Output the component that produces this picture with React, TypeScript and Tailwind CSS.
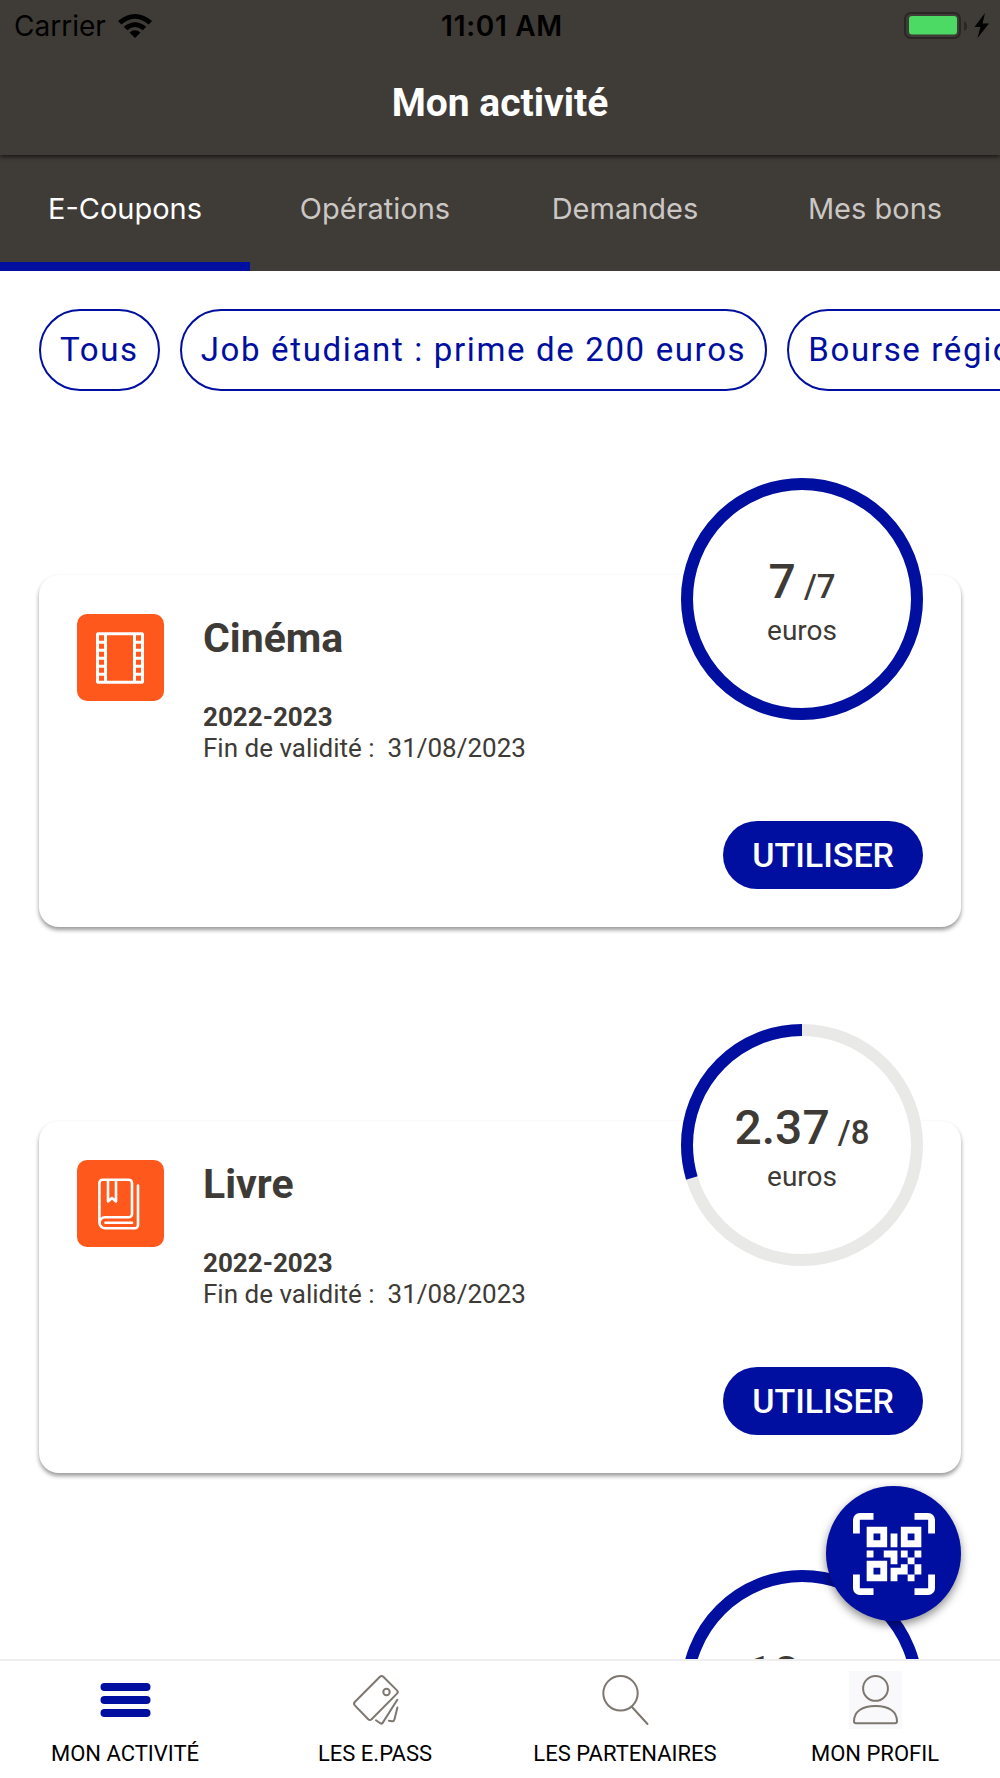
import React, { useState } from "react";

interface Coupon {
  id: string;
  title: string;
  period: string;
  validity: string;
  remaining: number;
  total: number;
  icon: React.FC;
}

const CinemaIcon: React.FC = () => (
  <svg viewBox="0 0 87 87" className="size-full" fill="none" stroke="white" strokeWidth="3">
    <rect x="20.5" y="19.8" width="45" height="48.4" rx="0.5" />
    <path d="M28.5 20v48M57.5 20v48" />
    <path d="M20 28.2h8M20 36.2h8M20 44.2h8M20 52.2h8M20 60.2h8" />
    <path d="M58 28.2h8M58 36.2h8M58 44.2h8M58 52.2h8M58 60.2h8" />
  </svg>
);

const BookIcon: React.FC = () => (
  <svg
    viewBox="0 0 87 87"
    className="size-full"
    fill="none"
    stroke="white"
    strokeWidth="2.6"
    strokeLinecap="round"
    strokeLinejoin="round"
  >
    <path d="M22.4 62.7V23a3.3 3.3 0 0 1 3.3-3.3h26a3.3 3.3 0 0 1 3.3 3.3v31a3.3 3.3 0 0 1-3.3 3.3H28a5.5 5.5 0 0 0 0 11h29.7a3.3 3.3 0 0 0 3.3-3.3V25.5" />
    <path d="M28.5 62.8H55" />
    <path d="M31 20v21.5l4-3.5 4 3.5V20" />
  </svg>
);

const MenuIcon: React.FC = () => (
  <svg viewBox="0 0 53 58" className="size-full" fill="#000f9f">
    <rect x="1.5" y="12" width="50" height="8" rx="4" />
    <rect x="1.5" y="25" width="50" height="8" rx="4" />
    <rect x="1.5" y="38" width="50" height="8" rx="4" />
  </svg>
);

const PassIcon: React.FC = () => (
  <svg
    viewBox="0 0 53 58"
    className="size-full"
    fill="none"
    stroke="#7d7770"
    strokeWidth="2"
    strokeLinecap="round"
    strokeLinejoin="round"
  >
    <path d="M34.3 5.8 48 19.4q1.6 1.6 0 3.2L22.6 48.2q-1.7 1.7-3.4 0L5.8 34.4q-1.6-1.7 0-3.4L30.9 5.8q1.7-1.7 3.4 0Z" />
    <circle cx="37.5" cy="21" r="3.2" />
    <path d="M48.3 28.8 33.8 51.6q-1 1.6-2.6.6L27 49.3" />
    <path d="m48.4 36.5-2.9 11.8q-.5 2.2-2.6 1.9l-3-.5" />
  </svg>
);

const SearchIcon: React.FC = () => (
  <svg viewBox="0 0 53 58" className="size-full" fill="none" stroke="#7d7770" strokeWidth="2">
    <circle cx="21.5" cy="22.3" r="17.2" />
    <path d="M33 36l15.5 17" strokeLinecap="round" />
  </svg>
);

const ProfileIcon: React.FC = () => (
  <svg viewBox="0 0 53 58" className="size-full bg-[#f9f9fc]" fill="none" stroke="#7d7770" strokeWidth="2">
    <circle cx="26.5" cy="17.4" r="12.4" />
    <path d="M5 50.3C5 40.5 13 35 26.5 35S48 40.5 48 50.3q0 2-2 2H7q-2 0-2-2Z" />
  </svg>
);

const WifiIcon: React.FC = () => (
  <svg viewBox="0 0 34 24" className="h-6 w-[34px]" fill="black">
    <path d="M0 7Q17-7 34 7l-3.4 3.5Q17-1 3.4 10.5Z" />
    <path d="M5.8 12.8Q17 3.6 28.2 12.8L24.8 16.2Q17 10 9.2 16.2Z" />
    <path d="M11.5 18.4Q17 14.2 22.5 18.4L17 24Z" />
  </svg>
);

const BatteryIcon: React.FC = () => (
  <svg viewBox="0 0 86 28" className="h-7 w-[86px]">
    <rect x="1" y="1" width="55" height="25" rx="6" fill="none" stroke="#2a2623" strokeWidth="2" />
    <rect x="5" y="4" width="48" height="18.5" rx="3" fill="#4cd964" />
    <path d="M60 9q3 1.5 3 5t-3 5Z" fill="#2a2623" />
    <path d="M81 1 70.5 15h6l-3 11L85 11.5h-6.5Z" fill="black" />
  </svg>
);

const QrScanIcon: React.FC = () => (
  <svg viewBox="0 0 12 12" className="size-[82px]" fill="white" fillRule="evenodd">
    <path d="M0 3V1a1 1 0 0 1 1-1h2v1H1v2ZM9 0h2a1 1 0 0 1 1 1v2h-1V1H9ZM12 9v2a1 1 0 0 1-1 1H9v-1h2V9ZM3 12H1a1 1 0 0 1-1-1V9h1v2h2Z" />
    <path d="M2 2h3v3H2ZM3 3v1h1V3ZM7 2h3v3H7ZM8 3v1h1V3ZM2 7h3v3H2ZM3 8v1h1V8Z" />
    <path d="M5.5 3h1v2h-1ZM2 5.5h1v1H2ZM4.5 5.5h2v2h-1v-1h-1ZM7 5.5h1v1H7ZM9 5.5h1v1H9ZM8 6.5h1v1H8Z" />
    <path d="M7 7.5h1V9H6.5v1h-1V8H7ZM9 7.5h1V9H9ZM8 9h1v1H8Z" />
  </svg>
);

const tabs = ["E-Coupons", "Opérations", "Demandes", "Mes bons"];

const filters = ["Tous", "Job étudiant : prime de 200 euros", "Bourse régionale"];

const coupons: Coupon[] = [
  {
    id: "cinema",
    title: "Cinéma",
    period: "2022-2023",
    validity: "31/08/2023",
    remaining: 7,
    total: 7,
    icon: CinemaIcon,
  },
  {
    id: "livre",
    title: "Livre",
    period: "2022-2023",
    validity: "31/08/2023",
    remaining: 2.37,
    total: 8,
    icon: BookIcon,
  },
  {
    id: "spectacle",
    title: "Spectacle",
    period: "2022-2023",
    validity: "31/08/2023",
    remaining: 10,
    total: 10,
    icon: CinemaIcon,
  },
];

const navItems = [
  { label: "MON ACTIVITÉ", icon: MenuIcon },
  { label: "LES E.PASS", icon: PassIcon },
  { label: "LES PARTENAIRES", icon: SearchIcon },
  { label: "MON PROFIL", icon: ProfileIcon },
];

const BalanceRing: React.FC<{ remaining: number; total: number }> = ({ remaining, total }) => (
  <div className="grid size-[242px] place-items-center rounded-full bg-white">
    <svg viewBox="0 0 242 242" className="size-full [grid-area:1/1]" fill="none" strokeWidth="12">
      <circle cx="121" cy="121" r="115" stroke="#e9e9e8" />
      {/* Fills counter-clockwise from the top */}
      <circle
        cx="121"
        cy="121"
        r="115"
        stroke="#000f9f"
        pathLength={100}
        strokeDasharray={`${(remaining / total) * 100} 100`}
        transform="translate(242 0) scale(-1 1) rotate(-90 121 121)"
      />
    </svg>
    <div className="pt-2.5 text-center [grid-area:1/1]">
      <p className="text-[48px] leading-12 font-medium">
        {remaining}
        <span className="text-[33px]"> /{total}</span>
      </p>
      <p className="text-[28px] leading-10">euros</p>
    </div>
  </div>
);

const CouponCard: React.FC<{ coupon: Coupon }> = ({ coupon }) => {
  const Icon = coupon.icon;
  return (
    <article className="flex rounded-[20px] bg-white px-[38px] pt-[39px] pb-[38px] shadow-[0_3px_4px_rgba(0,0,0,0.4)]">
      <div className="size-[87px] shrink-0 overflow-hidden rounded-[10px] bg-[#ff581c]">
        <Icon />
      </div>
      <div className="flex-1 pl-[39px]">
        <h2 className="text-[41px] leading-12 font-bold">{coupon.title}</h2>
        <p className="mt-10 text-[26px] leading-[31px] font-bold">{coupon.period}</p>
        <p className="text-[26px] leading-[31px]">Fin de validité :&nbsp; {coupon.validity}</p>
      </div>
      {/* The ring sticks out above the card */}
      <div className="-mt-[136px] flex flex-col items-end gap-[101px]">
        <BalanceRing remaining={coupon.remaining} total={coupon.total} />
        <button
          type="button"
          className="h-[68px] rounded-full bg-[#000f9f] px-[29px] text-[34px] leading-10 font-medium text-white"
        >
          UTILISER
        </button>
      </div>
    </article>
  );
};

const App: React.FC = () => {
  const [activeTab, setActiveTab] = useState("E-Coupons");

  return (
    <div className="flex h-screen flex-col overflow-hidden bg-white font-['Roboto',sans-serif] text-[#3e3a35]">
      <header className="relative z-10 bg-[#3f3b36] pb-8 shadow-[0_2px_4px_rgba(0,0,0,0.6)]">
        <div className="flex h-[51px] items-center px-3.5 font-['Inter',sans-serif] text-[28px] text-black">
          <div className="flex flex-1 items-center gap-3">
            <span>Carrier</span>
            <WifiIcon />
          </div>
          <span className="font-semibold tracking-wide">11:01 AM</span>
          <div className="-mr-1 flex flex-1 justify-end">
            <BatteryIcon />
          </div>
        </div>
        <h1 className="pt-8 text-center text-[39px] leading-10 font-bold text-white">Mon activité</h1>
      </header>

      <div role="tablist" className="grid grid-cols-4 bg-[#3f3b36]">
        {tabs.map((tab) => (
          <button
            key={tab}
            type="button"
            role="tab"
            aria-selected={activeTab === tab}
            onClick={() => setActiveTab(tab)}
            className={`h-[116px] border-b-9 font-['Inter',sans-serif] text-[29px] ${
              activeTab === tab ? "border-[#000f9f] text-white" : "border-transparent text-[#cbc7c4]"
            }`}
          >
            {tab}
          </button>
        ))}
      </div>

      <div className="relative min-h-0 flex-1">
        <main className="h-full overflow-y-auto [scrollbar-width:none]">
          <div className="flex gap-5 overflow-x-auto px-[39px] pt-[38px] [scrollbar-width:none]">
            {filters.map((filter) => (
              <button
                key={filter}
                type="button"
                className="h-[82px] shrink-0 rounded-full border-2 border-[#000f9f] px-[19px] text-[33px] tracking-wider whitespace-nowrap text-[#000f9f]"
              >
                {filter}
              </button>
            ))}
          </div>

          <div className="flex flex-col gap-[194px] px-[39px] pt-[184px] pb-10">
            {coupons.map((coupon) => (
              <CouponCard key={coupon.id} coupon={coupon} />
            ))}
          </div>
        </main>

        <button
          type="button"
          aria-label="Scanner un QR code"
          className="absolute right-[39px] bottom-[38px] flex size-[135px] items-center justify-center rounded-full bg-[#000f9f] shadow-[0_4px_10px_rgba(0,0,0,0.45)]"
        >
          <QrScanIcon />
        </button>
      </div>

      <nav className="grid grid-cols-4 border-t-2 border-[#eeeeee] bg-white pt-[10px] pb-3">
        {navItems.map(({ label, icon: Icon }) => (
          <a key={label} href="#" className="flex flex-col items-center gap-[13px] text-[22px] leading-6 text-black">
            <span className="h-[58px] w-[53px]">
              <Icon />
            </span>
            {label}
          </a>
        ))}
      </nav>
    </div>
  );
};

export default App;
